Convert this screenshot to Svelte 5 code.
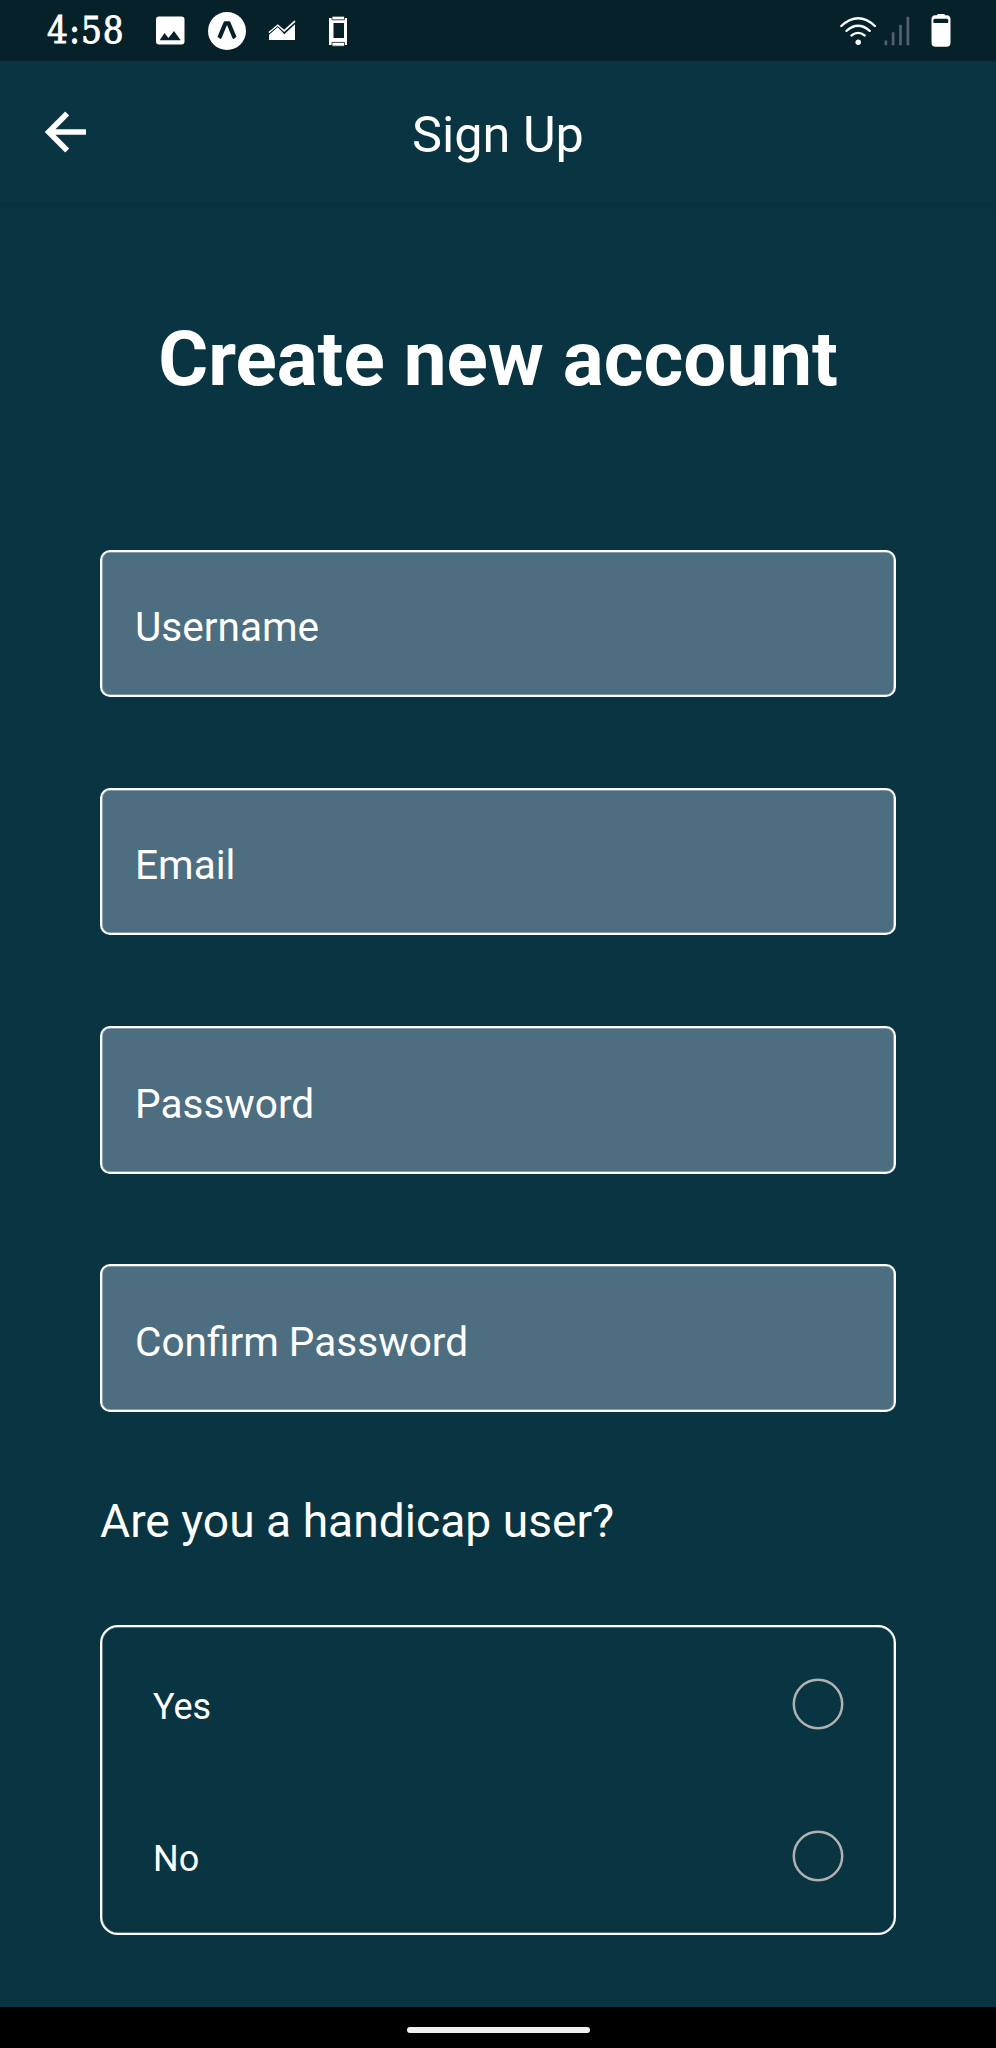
<script>
  const fields = ['Username', 'Email', 'Password', 'Confirm Password'];
  const options = ['Yes', 'No'];
</script>

<div class="screen">
  <div class="status">
    <span class="time">4:58</span>
    <div class="notices">
      <svg width="30" height="30" viewBox="155 16 30 30">
        <path fill="#fff" fill-rule="evenodd" d="M159 16.5h22.5q3 0 3 3v22q0 3-3 3H159q-3 0-3-3v-22q0-3 3-3zM159.7 40.2h21L174 31l-5.6 7-3.9-5z" />
      </svg>
      <svg width="40" height="40" viewBox="206.5 11 40 40">
        <circle cx="226.5" cy="31" r="19" fill="#fff" />
        <path fill="#07212a" d="M224.2 21.3h4.6q.7 0 1 .8l6.2 14.6-2.7 2.4q-.9-.1-1.4-1.2l-5.4-13-5.4 13q-.5 1.1-1.4 1.2l-2.7-2.4 6.2-14.6q.3-.8 1-.8z" />
      </svg>
      <svg width="28" height="22" viewBox="268 21 28 22">
        <path fill="#fff" d="M269 41V35.4l8.8-7.5 6.5 7.3L295 25.3V41z" />
        <path fill="none" stroke="#fff" stroke-width="1.8" d="M269 33.6l8.8-7.2 6.3 5.5L295 22.2" />
        <path fill="none" stroke="#07212a" stroke-width="1" d="M269 35.1l8.8-7.6 6.5 6.7L295 24.1" />
      </svg>
      <svg class="phone" width="20" height="32" viewBox="328 14 20 32">
        <path fill="#fff" fill-rule="evenodd" d="M329 17h18v27h-18zM333.5 22v15h10.5V22z" />
        <path fill="#fff" stroke="#07212a" stroke-width=".8" d="M332 15.2h12.5v3.6H332zM332 41.4h12.5v3.8H332z" />
      </svg>
    </div>
    <div class="system">
      <svg width="38" height="32" viewBox="839 13 38 32" fill="none" stroke="#fff" stroke-width="2.3" stroke-linecap="round">
        <path d="M841.3 24q16.9-15.5 33.6 0M846.5 28.9q11.6-10.2 23.2 0M851.5 33.5q6.6-5.3 13.2 0" />
        <circle cx="858.2" cy="40.3" r="2.7" fill="#fff" stroke="none" />
      </svg>
      <svg width="26" height="32" viewBox="883.5 14 26 32" fill="none" stroke="#516269" stroke-width="2.7">
        <path d="M885.4 39.5v4.8M892.6 31.3v13M900 23.8v20.5M907.4 15.8v28.5" />
      </svg>
      <svg width="22" height="36" viewBox="929.5 13 22 36">
        <path fill="#fff" d="M937.5 14h6q.7 0 .9 1.2h2q3.6.3 3.6 4v23.5q0 4-4 4h-11q-4 0-4-4V19.2q0-3.7 3.6-4h2q.2-1.2.9-1.2z" />
        <path fill="#07212a" d="M934.7 18.7h11.5q1.5 0 1.5 1.5V23h-14.8v-2.8q0-1.5 1.8-1.5z" />
      </svg>
    </div>
  </div>

  <header>
    <svg class="back" width="44" height="44" viewBox="44 110 44 44" fill="none" stroke="#fff" stroke-width="5.6">
      <path d="M86 132H50M67.2 113.5L48.7 132l18.5 18.5" />
    </svg>
    <span class="heading">Sign Up</span>
  </header>

  <main>
    <h1>Create new account</h1>
    <div class="fields">
      {#each fields as field}
        <div class="field">{field}</div>
      {/each}
    </div>
    <p>Are you a handicap user?</p>
    <div class="choices">
      {#each options as option}
        <div class="option">
          <span>{option}</span>
          <svg width="52" height="52" viewBox="0 0 52 52"><circle cx="26" cy="26" r="24.2" fill="none" stroke="#b1b0b0" stroke-width="2.5" /></svg>
        </div>
      {/each}
    </div>
  </main>

  <footer><div class="handle"></div></footer>
</div>

<style>
  :global(body) { margin: 0; background: #093441; }
  .screen {
    width: 996px; height: 2048px; overflow: hidden;
    display: flex; flex-direction: column;
    background: #093441; color: #fff; font-family: Roboto, sans-serif;
  }
  svg { display: block; flex: none; }
  .status {
    height: 61px; flex: none; box-sizing: border-box; background: #07212a;
    display: flex; align-items: center; padding: 0 44.5px 0 47px;
  }
  .time {
    width: 108px; font-family: "DejaVu Serif Condensed", "DejaVu Serif", serif;
    font-stretch: condensed; font-size: 36.5px; line-height: 61px; letter-spacing: 1px;
    -webkit-text-stroke: .8px #fff;
  }
  .notices { display: flex; align-items: center; gap: 21.5px; }
  .phone { margin-left: 10.5px; }
  .system { display: flex; align-items: center; gap: 6.5px; margin-left: auto; }
  .system svg:last-child { margin-left: 13.5px; }
  header {
    height: 142px; flex: none; display: grid; grid-template-columns: 88px 1fr 88px;
    align-items: center; box-shadow: 0 1px 5px rgba(8, 45, 50, .9);
  }
  .back { margin-left: 44px; }
  .heading { text-align: center; font-size: 50.4px; line-height: 60px; padding-top: 6px; }
  main { flex: 1; padding: 0 100px; display: flex; flex-direction: column; }
  h1 {
    margin: 106px -40px 0; text-align: center; white-space: nowrap;
    font-size: 76.4px; line-height: 100px; font-weight: 700;
  }
  .fields { margin-top: 140.5px; display: grid; gap: 90.6px; }
  .field {
    height: 147.7px; box-sizing: border-box; border: 2px solid #fff; border-radius: 10px;
    background: #4d6d80; box-shadow: inset 0 0 0 .6px rgba(255, 255, 255, .6);
    display: flex; align-items: center; padding: 7.6px 33px 0; font-size: 40.6px;
  }
  p { margin: 79px 0 0; font-size: 46.2px; line-height: 60px; }
  .choices {
    margin-top: 74px; height: 310px; box-sizing: border-box; border: 2px solid #fff; border-radius: 18px;
    box-shadow: inset 0 0 0 .6px rgba(255, 255, 255, .6);
    padding: 51px 50px 0 51px; display: flex; flex-direction: column; gap: 100px;
  }
  .option { height: 52px; display: flex; align-items: center; justify-content: space-between; }
  .option span { font-size: 36px; padding-top: 6px; }
  footer { height: 41px; flex: none; background: #000; display: flex; justify-content: center; }
  .handle { width: 183px; height: 6px; margin-top: 19.5px; border-radius: 3px; background: #f1f1f1; }
</style>
